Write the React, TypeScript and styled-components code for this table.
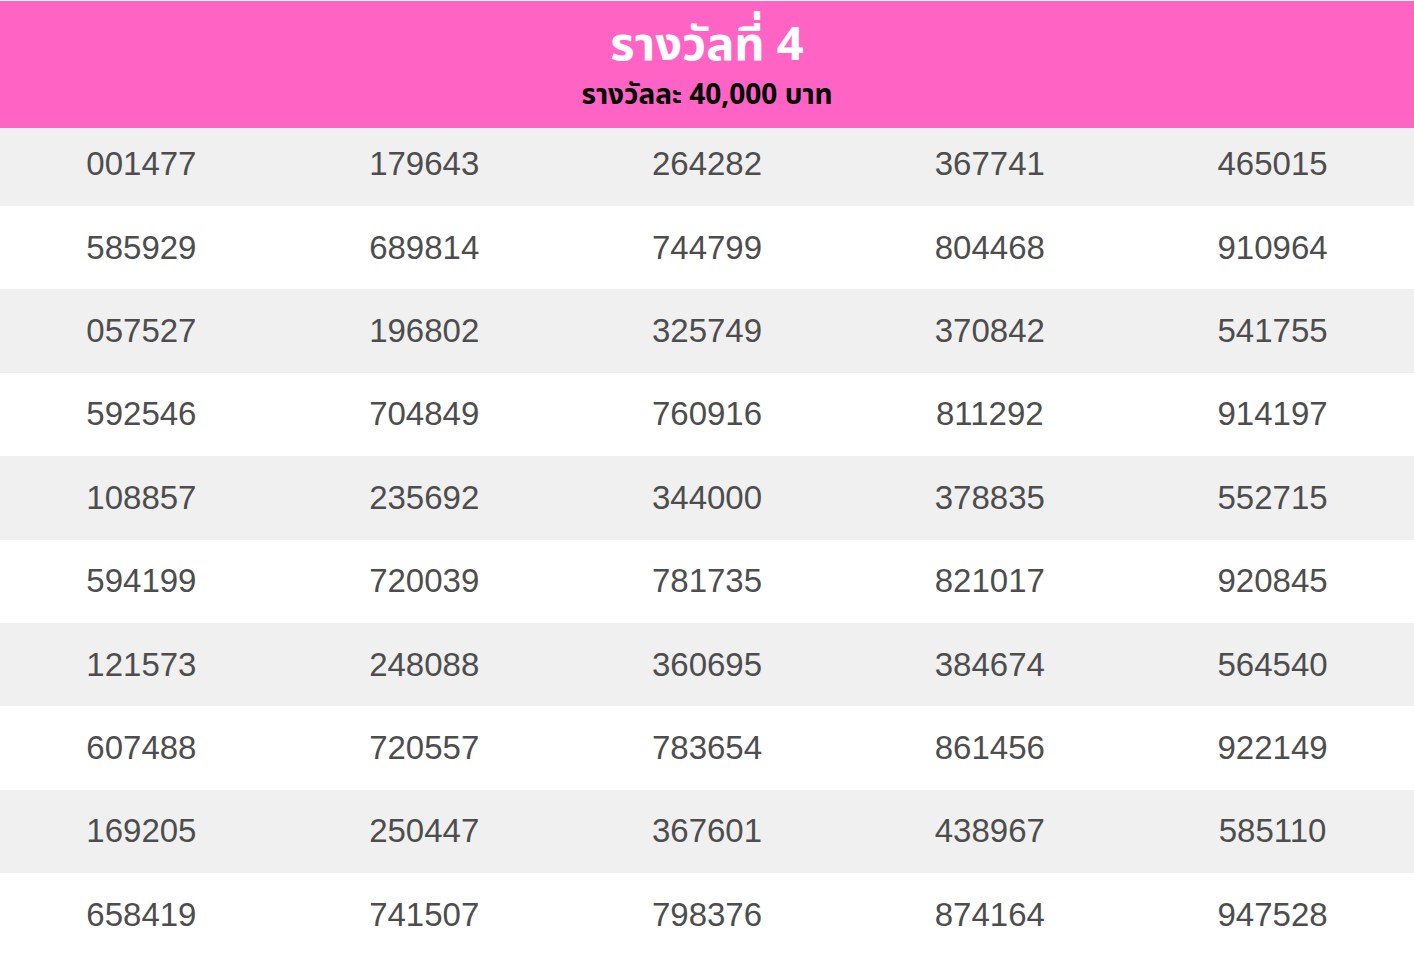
import React from "react";
import styled, { createGlobalStyle } from "styled-components";

const Global = createGlobalStyle`
  html, body { margin: 0; padding: 0; background: #ffffff; }
  body { font-family: "Liberation Sans", Arial, sans-serif; }
`;

const Page = styled.div`
  width: 1414px;
  padding-top: 1px;
  background: #ffffff;
`;

const Header = styled.header`
  height: 127px;
  box-sizing: border-box;
  padding-top: 13px;
  background: #ff63c3;
  display: flex;
  flex-direction: column;
  align-items: center;
  font-family: "Noto Sans", "Noto Sans Thai", "Noto Sans CJK SC", sans-serif;
`;

const Title = styled.h1`
  margin: 0;
  color: #ffffff;
  font-size: 47px;
  font-weight: 700;
  line-height: 56px;
`;

const Subtitle = styled.div`
  color: #000000;
  font-size: 28px;
  font-weight: 700;
  line-height: 34px;
  margin-top: 6px;
`;

const Table = styled.div`
  display: flex;
  flex-direction: column;
`;

const Row = styled.div<{ $alt: boolean; $first: boolean }>`
  display: grid;
  grid-template-columns: repeat(5, 1fr);
  align-items: center;
  height: ${(p) => (p.$first ? "78px" : "83.4px")};
  box-sizing: border-box;
  padding-bottom: ${(p) => (p.$first ? "7px" : "0")};
  background: ${(p) => (p.$alt ? "#f0f0f0" : "#ffffff")};
`;

const Cell = styled.div`
  text-align: center;
  font-family: "Liberation Sans", Arial, sans-serif;
  font-size: 33px;
  color: #4d4d4d;
  line-height: 38px;
`;

const numbers: string[][] = [
  ["001477", "179643", "264282", "367741", "465015"],
  ["585929", "689814", "744799", "804468", "910964"],
  ["057527", "196802", "325749", "370842", "541755"],
  ["592546", "704849", "760916", "811292", "914197"],
  ["108857", "235692", "344000", "378835", "552715"],
  ["594199", "720039", "781735", "821017", "920845"],
  ["121573", "248088", "360695", "384674", "564540"],
  ["607488", "720557", "783654", "861456", "922149"],
  ["169205", "250447", "367601", "438967", "585110"],
  ["658419", "741507", "798376", "874164", "947528"],
];

export default function App() {
  return (
    <Page>
      <Global />
      <Header>
        <Title>รางวัลที่ 4</Title>
        <Subtitle>รางวัลละ 40,000 บาท</Subtitle>
      </Header>
      <Table>
        {numbers.map((row, i) => (
          <Row key={i} $alt={i % 2 === 0} $first={i === 0}>
            {row.map((n) => (
              <Cell key={n}>{n}</Cell>
            ))}
          </Row>
        ))}
      </Table>
    </Page>
  );
}
